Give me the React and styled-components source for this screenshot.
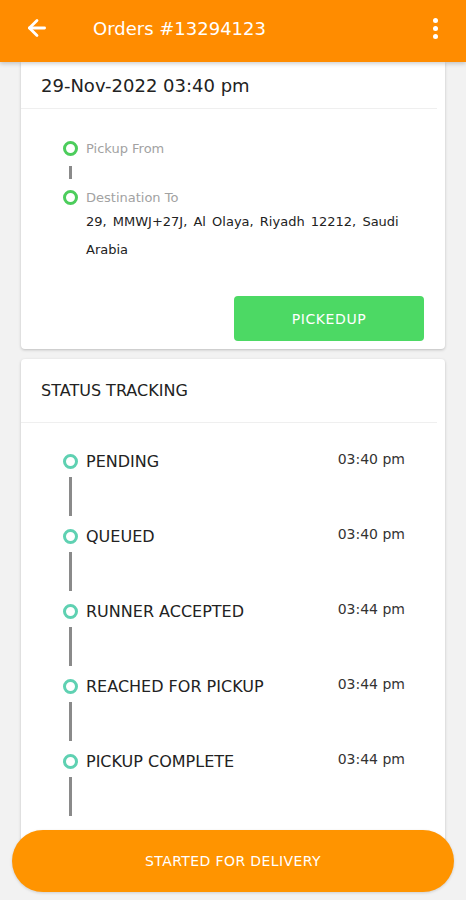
import React from "react";
import styled, { createGlobalStyle } from "styled-components";
import { ArrowLeft } from "lucide-react";

const Global = createGlobalStyle`
  body {
    margin: 0;
    background: #f2f2f2;
    font-family: "DejaVu Sans", "Noto Sans", sans-serif;
  }
`;

const Screen = styled.div`
  position: relative;
  width: 466px;
  height: 900px;
  display: flex;
  flex-direction: column;
  overflow: hidden;
  background: #f2f2f2;
`;

const Header = styled.header`
  box-sizing: border-box;
  height: 62px;
  flex-shrink: 0;
  display: flex;
  align-items: center;
  padding: 0 28px 6px 24px;
  background: #ff8c00;
  color: #fff;
  box-shadow: 0 2px 4px rgba(0, 0, 0, 0.18);
  z-index: 2;
`;

const Title = styled.h1`
  margin: 0 0 0 43px;
  font-size: 18px;
  font-weight: normal;
  flex: 1;
`;

const Kebab = styled.div`
  display: flex;
  flex-direction: column;
  gap: 3px;

  span {
    width: 5px;
    height: 5px;
    border-radius: 50%;
    background: #fff;
  }
`;

const Content = styled.main`
  flex: 1;
  padding: 0 21px;
  display: flex;
  flex-direction: column;
  gap: 10px;
`;

const Card = styled.section`
  background: #fff;
  border-radius: ${({ top }) => (top ? "0 0 4px 4px" : "4px")};
  box-shadow: 0 1px 3px rgba(0, 0, 0, 0.22);
  padding-bottom: ${({ pb }) => pb || 0}px;
`;

const CardHead = styled.div`
  height: ${({ h }) => h}px;
  display: flex;
  align-items: center;
  padding-left: 20px;
  margin: 0 8px 0 0;
  border-bottom: 1px solid #efefef;
  font-size: ${({ size }) => size}px;
  color: #222;
`;

const Route = styled.div`
  padding: 32px 21px 8px 42px;
  display: flex;
  flex-direction: column;
`;

const Point = styled.div`
  display: flex;
  align-items: center;
  gap: 8px;
  height: 14px;
  font-size: 13px;
  color: #a2a2a2;
`;

const Ring = styled.span`
  width: 15px;
  height: 15px;
  box-sizing: border-box;
  border-radius: 50%;
  border: 3px solid ${({ color }) => color};
  flex-shrink: 0;
`;

const Link = styled.span`
  display: block;
  width: 3px;
  height: ${({ h }) => h}px;
  margin: ${({ m }) => m};
  margin-left: 6px;
  background: #8a8a8a;
`;

const Address = styled.p`
  margin: 4px 0 0 23px;
  font-size: 13px;
  line-height: 28px;
  color: #222;
  word-spacing: 2px;
`;

const PickButton = styled.button`
  align-self: flex-end;
  margin-top: 32px;
  width: 190px;
  height: 45px;
  border: 0;
  border-radius: 4px;
  background: #4cd964;
  color: #fff;
  font-family: inherit;
  font-size: 14px;
  letter-spacing: 0.6px;
`;

const Steps = styled.ol`
  list-style: none;
  margin: 0;
  padding: 28px 40px 0 42px;
`;

const Step = styled.li`
  display: flex;
  flex-direction: column;
`;

const StepRow = styled.div`
  height: 20px;
  display: flex;
  align-items: center;
  gap: 8px;
`;

const StepLabel = styled.span`
  flex: 1;
  font-size: 16px;
  color: #222;
`;

const StepTime = styled.span`
  font-size: 14px;
  color: #333;
  margin-top: -4px;
`;

const Footer = styled.button`
  position: absolute;
  left: 12px;
  right: 12px;
  bottom: 8px;
  height: 62px;
  border: 0;
  border-radius: 31px;
  background: #ff9400;
  color: #fff;
  font-family: inherit;
  font-size: 14px;
  letter-spacing: 0.4px;
  box-shadow: 0 1px 3px rgba(0, 0, 0, 0.15);
`;

const steps = [
  { label: "PENDING", time: "03:40 pm" },
  { label: "QUEUED", time: "03:40 pm" },
  { label: "RUNNER ACCEPTED", time: "03:44 pm" },
  { label: "REACHED FOR PICKUP", time: "03:44 pm" },
  { label: "PICKUP COMPLETE", time: "03:44 pm" },
];

export default function App() {
  return (
    <Screen>
      <Global />
      <Header>
        <ArrowLeft size={26} strokeWidth={2.6} />
        <Title>Orders #13294123</Title>
        <Kebab>
          <span />
          <span />
          <span />
        </Kebab>
      </Header>

      <Content>
        <Card top>
          <CardHead h={46} size={18}>29-Nov-2022 03:40 pm</CardHead>
          <Route>
            <Point>
              <Ring color="#4ccd5c" />
              Pickup From
            </Point>
            <Link h={13} m="11px 0 11px" />
            <Point>
              <Ring color="#4ccd5c" />
              Destination To
            </Point>
            <Address>29, MMWJ+27J, Al Olaya, Riyadh 12212, Saudi Arabia</Address>
            <PickButton>PICKEDUP</PickButton>
          </Route>
        </Card>

        <Card pb={40}>
          <CardHead h={63} size={16}>STATUS TRACKING</CardHead>
          <Steps>
            {steps.map((s) => (
              <Step key={s.label}>
                <StepRow>
                  <Ring color="#5fd1b2" />
                  <StepLabel>{s.label}</StepLabel>
                  <StepTime>{s.time}</StepTime>
                </StepRow>
                <Link h={39} m="6px 0 10px" />
              </Step>
            ))}
          </Steps>
        </Card>
      </Content>

      <Footer>STARTED FOR DELIVERY</Footer>
    </Screen>
  );
}
